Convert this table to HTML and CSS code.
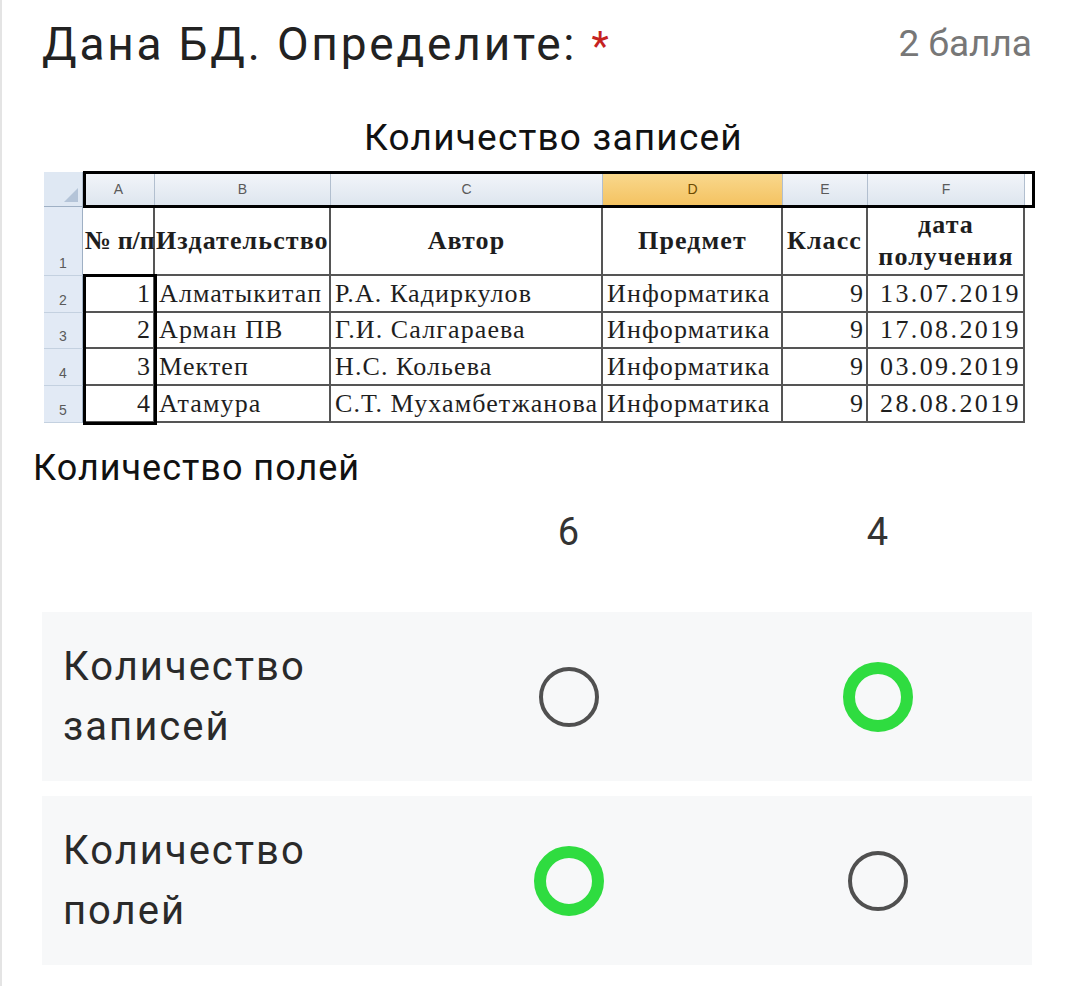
FILE: index.html
```html
<!DOCTYPE html>
<html lang="ru">
<head>
<meta charset="utf-8">
<title>Дана БД. Определите</title>
<link rel="stylesheet" href="styles.css">
</head>
<body>
<div class="card">
  <div class="q-head">
    <h1 class="q-title">Дана БД. Определите: <span class="req">*</span></h1>
    <div class="q-points">2 балла</div>
  </div>

  <div class="q-caption">Количество записей</div>

  <div class="sheet">
    <div class="xl">
      <div class="ch corner"><span class="tri"></span></div>
      <div class="ch">A</div>
      <div class="ch">B</div>
      <div class="ch">C</div>
      <div class="ch active">D</div>
      <div class="ch">E</div>
      <div class="ch">F</div>

      <div class="rh">1</div>
      <div class="c bold left tight"><span>№ п/п</span></div>
      <div class="c bold left flush"><span>Издательство</span></div>
      <div class="c bold center"><span>Автор</span></div>
      <div class="c bold center"><span>Предмет</span></div>
      <div class="c bold center flush"><span>Класс</span></div>
      <div class="c bold center wrap"><span>дата<br>получения</span></div>

      <div class="rh">2</div>
      <div class="c right"><span>1</span></div>
      <div class="c left"><span>Алматыкитап</span></div>
      <div class="c left"><span>Р.А. Кадиркулов</span></div>
      <div class="c left"><span>Информатика</span></div>
      <div class="c right"><span>9</span></div>
      <div class="c right num"><span>13.07.2019</span></div>

      <div class="rh">3</div>
      <div class="c right"><span>2</span></div>
      <div class="c left"><span>Арман ПВ</span></div>
      <div class="c left"><span>Г.И. Салгараева</span></div>
      <div class="c left"><span>Информатика</span></div>
      <div class="c right"><span>9</span></div>
      <div class="c right num"><span>17.08.2019</span></div>

      <div class="rh">4</div>
      <div class="c right"><span>3</span></div>
      <div class="c left"><span>Мектеп</span></div>
      <div class="c left"><span>Н.С. Кольева</span></div>
      <div class="c left"><span>Информатика</span></div>
      <div class="c right"><span>9</span></div>
      <div class="c right num"><span>03.09.2019</span></div>

      <div class="rh">5</div>
      <div class="c right"><span>4</span></div>
      <div class="c left"><span>Атамура</span></div>
      <div class="c left"><span>С.Т. Мухамбетжанова</span></div>
      <div class="c left"><span>Информатика</span></div>
      <div class="c right"><span>9</span></div>
      <div class="c right num"><span>28.08.2019</span></div>
    </div>
    <div class="mark mark-cols"></div>
    <div class="mark mark-a"></div>
  </div>

  <div class="q-sub">Количество полей</div>

  <div class="grid grid-head">
    <span></span>
    <span class="opt">6</span>
    <span class="opt">4</span>
  </div>

  <div class="grid grid-row">
    <div class="row-label">Количество<br>записей</div>
    <div class="cell"><span class="radio"></span></div>
    <div class="cell"><span class="radio checked"></span></div>
  </div>

  <div class="grid grid-row">
    <div class="row-label">Количество<br>полей</div>
    <div class="cell"><span class="radio checked"></span></div>
    <div class="cell"><span class="radio"></span></div>
  </div>
</div>
</body>
</html>
```

FILE: styles.css
```css
* { box-sizing: border-box; }

html, body {
  margin: 0;
  padding: 0;
  background: #ffffff;
}

body {
  font-family: Roboto, "Noto Sans", "Liberation Sans", sans-serif;
  color: #202124;
}

.card {
  min-height: 986px;
  border-left: 2px solid #e4e4e4;
  padding: 16px 0 20px 0;
}

.q-head {
  display: flex;
  justify-content: space-between;
  align-items: flex-start;
  height: 56px;
  padding: 0 39px 0 40px;
}

.q-title {
  margin: 0;
  font-weight: 400;
  font-size: 46px;
  line-height: 56px;
  letter-spacing: 2.8px;
  color: #222;
}

.req {
  color: #c5221f;
  font-size: 40px;
  line-height: 0;
  letter-spacing: 0;
}

.q-points {
  font-size: 37px;
  line-height: 56px;
  color: #777;
}

.q-caption {
  margin-top: 44px;
  text-align: center;
  font-size: 37px;
  line-height: 44px;
  letter-spacing: 1.2px;
  color: #111;
  padding-left: 34px;
}

/* spreadsheet picture */
.sheet {
  position: relative;
  margin: 12px 0 0 42px;
  width: 990px;
  height: 254px;
}

.xl {
  display: grid;
  grid-template-columns: 39px 72px 176px 272px 180px 85px 157px;
  grid-template-rows: 35px 69px 37px 36px 37px 37px;
  font-family: "Liberation Serif", "Times New Roman", serif;
  color: #1e1e1e;
}

.ch {
  display: flex;
  align-items: center;
  justify-content: center;
  font-family: "Liberation Sans", Arial, sans-serif;
  font-size: 14px;
  color: #5a5a5a;
  background: linear-gradient(#f3f6fa, #dde5ee);
  border-right: 1px solid #b2bfcf;
  border-bottom: 1px solid #9fb0c4;
}

.ch.corner {
  position: relative;
  background: #dfe8f3;
  border-right: 1px solid #b2bfcf;
}

.tri {
  position: absolute;
  right: 4px;
  bottom: 4px;
  width: 0;
  height: 0;
  border-left: 14px solid transparent;
  border-bottom: 14px solid #b4c4d8;
}

.ch.active {
  background: linear-gradient(#f9d98f, #f4c260);
  color: #6b4a00;
}

.rh {
  display: flex;
  align-items: flex-end;
  justify-content: center;
  padding-bottom: 4px;
  font-family: "Liberation Sans", Arial, sans-serif;
  font-size: 14px;
  color: #5a5a5a;
  background: #e2eaf5;
  border-right: 1px solid #9fb0c4;
  border-bottom: 1px solid #c4d1e0;
}

.c {
  display: flex;
  align-items: center;
  font-size: 26px;
  line-height: 30px;
  letter-spacing: 1.1px;
  white-space: nowrap;
  border-right: 2px solid #555;
  border-bottom: 2px solid #555;
  padding: 0 3px 0 4px;
  overflow: visible;
}

.c.bold { font-weight: 700; }
.c.left { justify-content: flex-start; }
.c.right { justify-content: flex-end; padding-right: 2px; }
.c.center { justify-content: center; text-align: center; }
.c.wrap { line-height: 32px; }
.c.tight { letter-spacing: 0; padding-left: 2px; }
.c.flush { padding-left: 1px; padding-right: 1px; }
.c.num { letter-spacing: 2.4px; }

.mark {
  position: absolute;
  border: 3px solid #000;
}

.mark-cols {
  left: 39px;
  top: -1px;
  width: 952px;
  height: 37px;
}

.mark-a {
  left: 39px;
  top: 102px;
  width: 74px;
  height: 151px;
}

.q-sub {
  margin-top: 20px;
  padding-left: 31px;
  font-size: 36px;
  line-height: 44px;
  letter-spacing: 1px;
  color: #111;
}

/* choice grid */
.grid {
  display: grid;
  grid-template-columns: 372px 309px 309px;
  margin-left: 40px;
  width: 990px;
}

.grid-head {
  margin-top: 14px;
  height: 56px;
  align-items: center;
}

.opt {
  text-align: center;
  font-size: 38px;
  color: #333;
}

.grid-row {
  margin-top: 15px;
  height: 169px;
  align-items: center;
  background: #f7f8f9;
}

.grid-head + .grid-row {
  margin-top: 52px;
}

.row-label {
  padding-left: 21px;
  font-size: 40px;
  line-height: 60px;
  letter-spacing: 2px;
  color: #2a2a2a;
}

.cell {
  display: flex;
  justify-content: center;
  align-items: center;
}

.radio {
  display: block;
  width: 60px;
  height: 60px;
  border-radius: 50%;
  border: 4px solid #505050;
}

.radio.checked {
  width: 70px;
  height: 70px;
  border: 12px solid #2fdc40;
}
```
